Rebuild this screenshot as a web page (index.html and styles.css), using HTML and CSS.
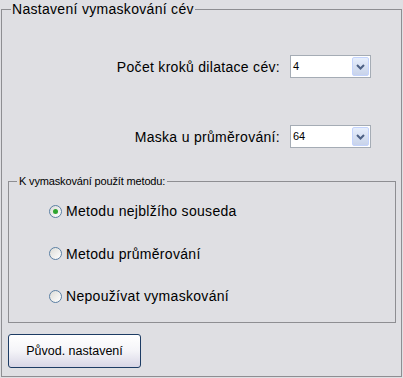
FILE: index.html
```html
<!DOCTYPE html>
<html lang="cs">
<head>
<meta charset="utf-8">
<link rel="stylesheet" href="styles.css">
</head>
<body>
<fieldset class="panel">
  <legend class="panel-title">Nastavení vymaskování cév</legend>
  <div class="row row-first">
    <label class="row-label">Počet kroků dilatace cév:</label>
    <div class="combo">
      <span class="combo-value">4</span>
      <span class="combo-btn"><svg width="9" height="6" viewBox="0 0 9 6"><path d="M1 1 L4.5 4.5 L8 1" fill="none" stroke="#4d6185" stroke-width="2"/></svg></span>
    </div>
  </div>
  <div class="row row-second">
    <label class="row-label">Maska u průměrování:</label>
    <div class="combo">
      <span class="combo-value">64</span>
      <span class="combo-btn"><svg width="9" height="6" viewBox="0 0 9 6"><path d="M1 1 L4.5 4.5 L8 1" fill="none" stroke="#4d6185" stroke-width="2"/></svg></span>
    </div>
  </div>
  <fieldset class="group">
    <legend class="group-title">K vymaskování použít metodu:</legend>
    <div class="radio">
      <span class="radio-dot checked"></span>
      <span class="radio-text">Metodu nejblžího souseda</span>
    </div>
    <div class="radio">
      <span class="radio-dot"></span>
      <span class="radio-text">Metodu průměrování</span>
    </div>
    <div class="radio">
      <span class="radio-dot"></span>
      <span class="radio-text">Nepoužívat vymaskování</span>
    </div>
  </fieldset>
  <button class="btn">Původ. nastavení</button>
</fieldset>
</body>
</html>
```
FILE: styles.css
```css
html, body {
  margin: 0;
  padding: 0;
  background: #dfdfe3;
  width: 403px;
  height: 378px;
  overflow: hidden;
  font-family: "Liberation Sans", Arial, sans-serif;
  color: #000;
}

.panel {
  box-sizing: border-box;
  width: 401px;
  margin: 0 0 0 1px;
  padding: 0 0 8px 0;
  border: 1px solid #8e8e92;
  display: flex;
  flex-direction: column;
  min-width: 0;
}

.panel-title {
  font-size: 14px;
  letter-spacing: 0.3px;
  line-height: 18px;
  padding: 0 1px;
  margin-left: 9px;
}

.row {
  display: flex;
  justify-content: flex-end;
  align-items: center;
  padding-right: 30px;
  height: 23px;
}

.row-first { margin-top: 37px; }
.row-second { margin-top: 47px; }

.row-label {
  font-size: 14px;
  letter-spacing: 0.3px;
  margin-right: 10px;
}

.combo {
  box-sizing: border-box;
  width: 81px;
  height: 23px;
  border: 1px solid #a5acb5;
  background: #fff;
  display: flex;
  align-items: stretch;
}

.combo-value {
  flex: 1;
  font-size: 11px;
  line-height: 21px;
  padding-left: 2px;
}

.combo-btn {
  box-sizing: border-box;
  width: 17px;
  margin: 1px;
  border: 1px solid #c3d3fd;
  border-radius: 2px;
  background: linear-gradient(#e6eefc, #c8d3ea);
  display: flex;
  align-items: center;
  justify-content: center;
}

.group {
  box-sizing: border-box;
  width: 388px;
  margin: 27px 0 0 6px;
  padding: 14px 0 16px 0;
  border: 1px solid #8e8e92;
  display: flex;
  flex-direction: column;
  gap: 22.5px;
  min-width: 0;
}

.group-title {
  font-size: 11px;
  letter-spacing: -0.15px;
  line-height: 12px;
  padding: 0 2px;
  margin-left: 8px;
}

.radio {
  display: flex;
  align-items: center;
  height: 20px;
  margin-left: 40px;
}

.radio-dot {
  box-sizing: border-box;
  width: 13px;
  height: 13px;
  border: 1px solid #5b7fa3;
  border-radius: 50%;
  background: linear-gradient(135deg, #dcdcd7, #ffffff);
  margin-right: 4px;
  display: flex;
  align-items: center;
  justify-content: center;
}

.radio-dot.checked::after {
  content: "";
  width: 5px;
  height: 5px;
  border-radius: 50%;
  background: #2fa52f;
}

.radio-text {
  font-size: 14px;
  letter-spacing: 0.3px;
}

.btn {
  box-sizing: border-box;
  width: 133px;
  height: 34px;
  margin: 11px 0 0 6px;
  border: 1px solid #1d3c64;
  border-radius: 3px;
  background: linear-gradient(#ffffff 0%, #f4f4f8 50%, #d8d6e6 100%);
  font-family: "Liberation Sans", Arial, sans-serif;
  font-size: 12.5px;
  color: #000;
  padding: 0;
}
```
